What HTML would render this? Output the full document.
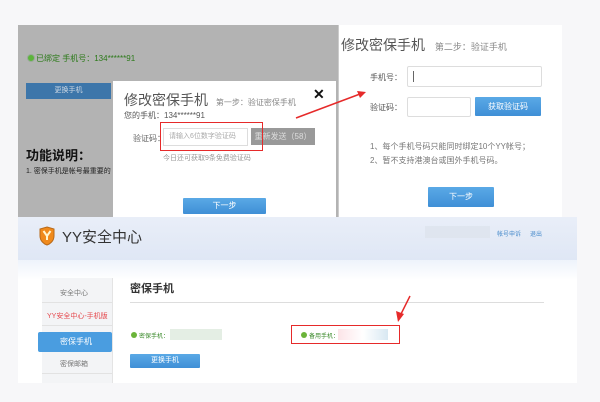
<!DOCTYPE html>
<html><head><meta charset="utf-8"><style>
*{margin:0;padding:0;box-sizing:border-box}
body{width:600px;height:402px;background:#f7f7f9;position:relative;overflow:hidden;font-family:"Liberation Sans","Noto Sans CJK SC",sans-serif;color:#444}
.a{position:absolute;white-space:nowrap}
.btn{position:absolute;background:linear-gradient(#5aa9e6,#3f8fd6);color:#fff;font-size:8px;text-align:center;border-radius:1px}
</style></head><body>
<!-- top-left gray page -->
<div class="a" style="left:18px;top:25px;width:320px;height:193px;background:#b3b3b3"></div>
<div class="a" style="left:27px;top:54px;width:8px;height:8px;border-radius:50%;background:#5cb43a;border:1px solid #9a9"></div>
<div class="a" style="left:36px;top:53px;font-size:8px;color:#2c7a1a">已绑定 手机号：134******91</div>
<div class="a" style="left:26px;top:83px;width:85px;height:16px;background:#3d76aa;color:#cfd9e4;font-size:7px;text-align:center;line-height:16px">更换手机</div>
<div class="a" style="left:26px;top:145px;font-size:13px;font-weight:bold;color:#111">功能说明：</div>
<div class="a" style="left:26px;top:166px;font-size:7px;color:#222">1. 密保手机是帐号最重要的</div>
<!-- dialog -->
<div class="a" style="left:113px;top:81px;width:223px;height:137px;background:#fff"></div>
<div class="a" style="left:124px;top:90px;font-size:14px;color:#555">修改密保手机 <span style="font-size:8px;color:#888;margin-left:4px">第一步：验证密保手机</span></div>
<div class="a" style="left:313px;top:86px;font-size:14px;font-weight:bold;color:#111">✕</div>
<div class="a" style="left:124px;top:110px;font-size:8px;color:#555">您的手机：134******91</div>
<div class="a" style="left:133px;top:133px;font-size:8px;color:#666">验证码：</div>
<div class="a" style="left:163px;top:128px;width:85px;height:18px;border:1px solid #ddd;font-size:7px;color:#aaa;line-height:16px;padding-left:5px">请输入6位数字验证码</div>
<div class="a" style="left:251px;top:128px;width:64px;height:17px;background:#999;color:#ddd;font-size:8px;line-height:17px;text-align:center">重新发送（58）</div>
<div class="a" style="left:160px;top:122px;width:103px;height:29px;border:1.5px solid #e62a2a"></div>
<div class="a" style="left:163px;top:153px;font-size:7px;color:#999">今日还可获取9条免费验证码</div>
<div class="btn" style="left:183px;top:198px;width:83px;height:16px;line-height:16px">下一步</div>
<!-- right panel -->
<div class="a" style="left:338px;top:25px;width:1px;height:193px;background:#ccc"></div>
<div class="a" style="left:339px;top:25px;width:223px;height:193px;background:#fff"></div>
<div class="a" style="left:341px;top:35px;font-size:14px;color:#555">修改密保手机 <span style="font-size:9px;color:#888;margin-left:6px">第二步：验证手机</span></div>
<div class="a" style="left:370px;top:72px;font-size:8px;color:#555">手机号：</div>
<div class="a" style="left:407px;top:66px;width:135px;height:21px;border:1px solid #ddd;border-radius:2px"></div>
<div class="a" style="left:413px;top:71px;width:1px;height:11px;background:#666"></div>
<div class="a" style="left:370px;top:102px;font-size:8px;color:#555">验证码：</div>
<div class="a" style="left:407px;top:97px;width:64px;height:20px;border:1px solid #ddd;border-radius:2px"></div>
<div class="btn" style="left:475px;top:97px;width:66px;height:19px;line-height:19px">获取验证码</div>
<div class="a" style="left:370px;top:141px;font-size:8px;color:#777">1、每个手机号码只能同时绑定10个YY帐号；</div>
<div class="a" style="left:370px;top:155px;font-size:8px;color:#777">2、暂不支持港澳台或国外手机号码。</div>
<div class="btn" style="left:428px;top:187px;width:66px;height:20px;line-height:20px">下一步</div>
<!-- bottom -->
<div class="a" style="left:18px;top:217px;width:559px;height:166px;background:#fff"></div>
<div class="a" style="left:18px;top:217px;width:559px;height:43px;background:linear-gradient(#e9eef8,#dfe7f5)"></div>
<div class="a" style="left:18px;top:260px;width:559px;height:20px;background:linear-gradient(#eef3fb,#fff)"></div>
<svg class="a" style="left:39px;top:226px" width="16" height="20" viewBox="0 0 16 20"><path d="M8 1 L15 3 L15 10 C15 15 11 18 8 19 C5 18 1 15 1 10 L1 3 Z" fill="#f08a1c" stroke="#b86a1a" stroke-width="1"/><path d="M4.5 5 L8 10 L11.5 5 M8 10 L8 14" stroke="#fff6d0" stroke-width="2" fill="none"/></svg>
<div class="a" style="left:62px;top:226px;font-size:15px;color:#333">YY安全中心</div>
<div class="a" style="left:425px;top:226px;width:65px;height:12px;background:#dde3ec;opacity:.8"></div>
<div class="a" style="left:497px;top:229px;font-size:6px;color:#4a8ccc">帐号申诉</div>
<div class="a" style="left:530px;top:229px;font-size:6px;color:#4a8ccc">退出</div>
<div class="a" style="left:42px;top:278px;width:70px;height:105px;background:#f3f4f6"></div>
<div class="a" style="left:112px;top:278px;width:1px;height:105px;background:#e4e4e4"></div>
<div class="a" style="left:60px;top:288px;font-size:7px;color:#777">安全中心</div>
<div class="a" style="left:42px;top:302px;width:70px;height:1px;background:#e2e2e2"></div>
<div class="a" style="left:47px;top:311px;font-size:7px;color:#e5484d">YY安全中心-手机版</div>
<div class="a" style="left:42px;top:325px;width:70px;height:1px;background:#e2e2e2"></div>
<div class="a" style="left:38px;top:332px;width:74px;height:20px;background:#4a9de0;border-radius:2px;color:#fff;font-size:8px;line-height:20px;padding-left:22px">密保手机</div>
<div class="a" style="left:60px;top:359px;font-size:7px;color:#777">密保邮箱</div>
<div class="a" style="left:42px;top:373px;width:70px;height:1px;background:#e2e2e2"></div>
<div class="a" style="left:130px;top:280px;font-size:11px;font-weight:bold;color:#333">密保手机</div>
<div class="a" style="left:130px;top:302px;width:414px;height:1px;background:#ddd"></div>
<div class="a" style="left:131px;top:332px;width:6px;height:6px;border-radius:50%;background:#6bb43a"></div>
<div class="a" style="left:139px;top:331px;font-size:6px;color:#3a8a2a">密保手机：</div>
<div class="a" style="left:170px;top:329px;width:52px;height:11px;background:#e4eee4"></div>
<div class="a" style="left:301px;top:332px;width:6px;height:6px;border-radius:50%;background:#6bb43a"></div>
<div class="a" style="left:309px;top:331px;font-size:6px;color:#3a8a2a">备用手机：</div>
<div class="a" style="left:338px;top:329px;width:50px;height:11px;background:linear-gradient(90deg,#fce4e8,#fff,#d8e8f2)"></div>
<div class="a" style="left:291px;top:325px;width:109px;height:19px;border:1.5px solid #e62a2a"></div>
<div class="btn" style="left:130px;top:354px;width:70px;height:14px;line-height:14px;font-size:7px">更换手机</div>
<svg class="a" style="left:0;top:0" width="600" height="402">
<line x1="296" y1="118" x2="360" y2="94" stroke="#e62a2a" stroke-width="1.5"/>
<path d="M366 92 L357 91 L360 98 Z" fill="#e62a2a"/>
<line x1="410" y1="296" x2="400" y2="316" stroke="#e62a2a" stroke-width="1.5"/>
<path d="M398 322 L396 311 L404 314 Z" fill="#e62a2a"/>
</svg>
</body></html>
